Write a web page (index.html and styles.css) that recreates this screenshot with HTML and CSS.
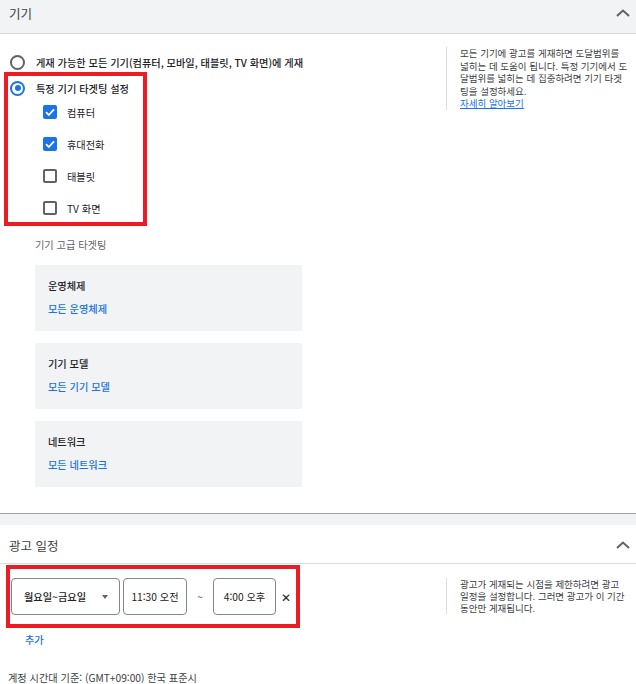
FILE: index.html
```html
<!DOCTYPE html>
<html lang="ko">
<head>
  <meta charset="UTF-8">
  <title>캠페인 설정</title>
  <link rel="stylesheet" href="styles.css">
</head>
<body>
  <section class="panel">
    <div class="panel-head gray">
      <span class="panel-title">기기</span>
      <svg class="chevron" width="14" height="8" viewBox="0 0 14 8"><path d="M1 7 L7 1.5 L13 7" fill="none" stroke="#5f6368" stroke-width="2"/></svg>
    </div>
    <div class="panel-body">
      <div class="main">
        <label class="radio-row"><span class="radio"></span>게재 가능한 모든 기기(컴퓨터, 모바일, 태블릿, TV 화면)에 게재</label>
        <div class="mark device-mark">
          <label class="radio-row"><span class="radio on"></span>특정 기기 타겟팅 설정</label>
          <div class="checks">
            <label class="check-row"><span class="check on"><svg width="14" height="14" viewBox="0 0 14 14"><path d="M3 7.2 L5.8 10 L11 4.3" fill="none" stroke="#fff" stroke-width="1.8"/></svg></span>컴퓨터</label>
            <label class="check-row"><span class="check on"><svg width="14" height="14" viewBox="0 0 14 14"><path d="M3 7.2 L5.8 10 L11 4.3" fill="none" stroke="#fff" stroke-width="1.8"/></svg></span>휴대전화</label>
            <label class="check-row"><span class="check"></span>태블릿</label>
            <label class="check-row"><span class="check"></span>TV 화면</label>
          </div>
        </div>
        <div class="adv">
          <div class="adv-label">기기 고급 타겟팅</div>
          <div class="adv-card">
            <div class="adv-title">운영체제</div>
            <a class="adv-link" href="#">모든 운영체제</a>
          </div>
          <div class="adv-card">
            <div class="adv-title">기기 모델</div>
            <a class="adv-link" href="#">모든 기기 모델</a>
          </div>
          <div class="adv-card">
            <div class="adv-title">네트워크</div>
            <a class="adv-link" href="#">모든 네트워크</a>
          </div>
        </div>
      </div>
      <aside class="help help-device">
        모든 기기에 광고를 게재하면 도달범위를 넓히는 데 도움이 됩니다. 특정 기기에서 도달범위를 넓히는 데 집중하려면 기기 타겟팅을 설정하세요.
        <a href="#">자세히 알아보기</a>
      </aside>
    </div>
  </section>

  <div class="divider"></div>

  <section class="panel">
    <div class="panel-head white">
      <span class="panel-title">광고 일정</span>
      <svg class="chevron" width="14" height="8" viewBox="0 0 14 8"><path d="M1 7 L7 1.5 L13 7" fill="none" stroke="#5f6368" stroke-width="2"/></svg>
    </div>
    <div class="panel-body">
      <div class="main">
        <div class="mark schedule-row">
          <div class="select">월요일~금요일<span class="caret"></span></div>
          <div class="time">11:30 오전</div>
          <span class="tilde">~</span>
          <div class="time">4:00 오후</div>
          <span class="remove">✕</span>
        </div>
        <a class="add" href="#">추가</a>
        <p class="tz">계정 시간대 기준: (GMT+09:00) 한국 표준시</p>
      </div>
      <aside class="help help-schedule">
        광고가 게재되는 시점을 제한하려면 광고 일정을 설정합니다. 그러면 광고가 이 기간 동안만 게재됩니다.
      </aside>
    </div>
  </section>
</body>
</html>
```

FILE: styles.css
```css
body {
  margin: 0;
  width: 636px;
  font-family: "Noto Sans CJK KR", "Noto Sans", sans-serif;
  font-size: 10.2px;
  color: #202124;
  background: #fff;
  overflow: hidden;
}
a {
  color: #1a73e8;
  text-decoration: none;
}
.panel-head {
  display: flex;
  align-items: center;
  justify-content: space-between;
  padding: 0 6px 0 9px;
  border-bottom: 1px solid #dadce0;
  box-sizing: border-box;
}
.panel-head.gray {
  height: 34px;
  padding-bottom: 7px;
  background: #f1f3f4;
}
.panel-head.white {
  height: 39px;
  padding-top: 2px;
}
.panel-title {
  font-size: 12.5px;
  color: #3c4043;
}
.panel-body {
  display: flex;
}
.main {
  width: 446px;
  flex: none;
  padding-left: 10px;
  box-sizing: border-box;
}
.help {
  flex: 1;
  border-left: 1px solid #dadce0;
  padding: 0 8px 0 13px;
  font-size: 9.5px;
  line-height: 12.5px;
  color: #3c4043;
  align-self: flex-start;
}
.help a {
  display: block;
  text-decoration: underline;
}
.help-device {
  margin-top: 13px;
}
.help-schedule {
  margin-top: 14px;
  line-height: 12px;
}

/* device targeting */
.main > .radio-row {
  margin-top: 16px;
}
.radio-row {
  display: flex;
  align-items: center;
  height: 24px;
  font-weight: 500;
}
.radio {
  width: 15px;
  height: 15px;
  border: 2px solid #5f6368;
  border-radius: 50%;
  box-sizing: border-box;
  margin-right: 11px;
  position: relative;
}
.radio.on {
  border-color: #1a73e8;
}
.radio.on::after {
  content: "";
  position: absolute;
  left: 2.5px;
  top: 2.5px;
  width: 6px;
  height: 6px;
  border-radius: 50%;
  background: #1a73e8;
}
.mark {
  border: 4px solid #ed1c24;
  box-sizing: border-box;
}
.device-mark {
  width: 143px;
  margin: -2px 0 0 -6px;
  padding-left: 2px;
}
.checks {
  margin: -4px 0 -2px 33px;
}
.check-row {
  display: flex;
  align-items: center;
  height: 32px;
}
.check {
  width: 14px;
  height: 14px;
  border: 2px solid #5f6368;
  border-radius: 2px;
  box-sizing: border-box;
  margin-right: 10px;
}
.check.on {
  border: none;
  background: #1a73e8;
}
.check svg {
  display: block;
}

.adv {
  margin: 12px 0 0 25px;
  width: 267px;
  padding-bottom: 26px;
}
.adv-label {
  color: #5f6368;
  line-height: 14px;
  margin-bottom: 13px;
}
.adv-card {
  background: #f1f3f4;
  height: 66px;
  padding: 14px 13px 0;
  box-sizing: border-box;
  margin-bottom: 12px;
}
.adv-card:last-child {
  margin-bottom: 0;
}
.adv-title {
  font-weight: 500;
  line-height: 14px;
}
.adv-link {
  display: block;
  margin-top: 9px;
  line-height: 14px;
  font-weight: 500;
}

.divider {
  height: 11px;
  border-top: 1px solid #9aa0a6;
  background: #f1f3f4;
}

/* schedule */
.schedule-row {
  display: flex;
  align-items: center;
  width: 294px;
  margin: 1px 0 0 -4px;
  padding: 9px 0 9px 1px;
}
.select,
.time {
  height: 37px;
  border: 1px solid #80868b;
  border-radius: 4px;
  box-sizing: border-box;
  display: flex;
  align-items: center;
}
.select {
  width: 109px;
  padding-left: 12px;
  font-weight: 500;
  position: relative;
}
.caret {
  position: absolute;
  left: 90px;
  top: 16px;
  border-left: 3.5px solid transparent;
  border-right: 3.5px solid transparent;
  border-top: 4px solid #5f6368;
}
.time {
  width: 64px;
  margin-left: 3px;
  justify-content: center;
}
.tilde {
  width: 26px;
  text-align: center;
  color: #5f6368;
}
.time + .tilde + .time {
  margin-left: 0;
  width: 63px;
}
.remove {
  margin-left: 5px;
  font-size: 12px;
  color: #202124;
}
.add {
  display: block;
  margin: 5px 0 0 15px;
  font-weight: 500;
  line-height: 14px;
}
.tz {
  margin: 24px 0 0 -2px;
  color: #3c4043;
  line-height: 14px;
}
```
